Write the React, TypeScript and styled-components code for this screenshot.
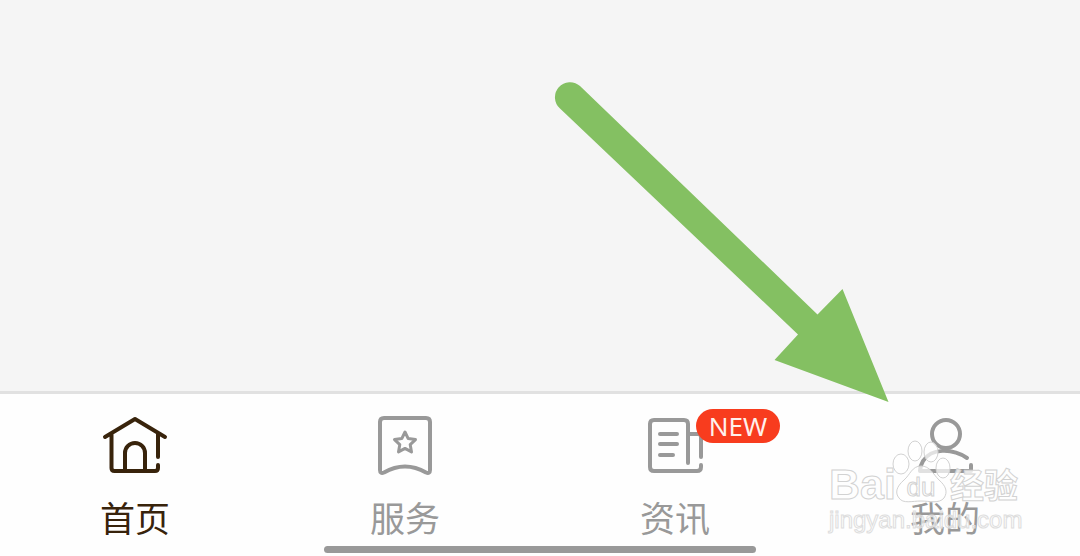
import React from 'react';
import styled, { createGlobalStyle } from 'styled-components';

const GlobalStyle = createGlobalStyle`
  *, *::before, *::after { box-sizing: border-box; }
  body { margin: 0; background: #f5f5f5; font-family: "Noto Sans", "Noto Sans CJK SC", sans-serif; }
`;

const Page = styled.div`
  position: relative;
  display: flex;
  flex-direction: column;
  min-height: 100vh;
  overflow: hidden;
`;

const Content = styled.main`
  flex: 1;
  background: #f5f5f5;
`;

const TabBar = styled.nav`
  display: flex;
  flex-direction: column;
  align-items: center;
  gap: 9px;
  padding: 18px 0 3px;
  border-top: 3px solid #e1e1e1;
  background: #fefefe;
`;

const Tabs = styled.div`
  display: grid;
  grid-template-columns: repeat(4, 1fr);
  width: 100%;
`;

const Tab = styled.button<{ $active?: boolean }>`
  display: flex;
  flex-direction: column;
  align-items: center;
  gap: 21px;
  padding: 0;
  border: 0;
  background: none;
  color: ${(p) => (p.$active ? '#38230b' : '#999999')};
  font-family: "Noto Sans CJK SC", sans-serif;
  font-size: 35px;
  line-height: 40px;
  cursor: pointer;
`;

const IconBox = styled.span`
  position: relative;
  display: block;
  width: 72px;
  height: 64px;
`;

const Glyph = styled.svg`
  display: block;
  width: 100%;
  height: 100%;
  fill: none;
  stroke: currentColor;
  stroke-width: 4;
  stroke-linecap: round;
  stroke-linejoin: round;
`;

const Badge = styled.span`
  position: absolute;
  top: -3px;
  left: 57px;
  width: 84px;
  border-radius: 17px;
  background: #f83c1e;
  color: #fff0ec;
  font-family: "Noto Sans", sans-serif;
  font-size: 26px;
  line-height: 34px;
  text-align: center;
`;

const HomeIndicator = styled.div`
  width: 40%;
  height: 7px;
  border-radius: 4px;
  background: #999999;
`;

const Arrow = styled.svg`
  position: absolute;
  right: 190px;
  bottom: 152px;
  width: 336px;
  height: 324px;
  pointer-events: none;
`;

const Watermark = styled.div`
  position: absolute;
  right: 59px;
  bottom: 22px;
  width: 192px;
  pointer-events: none;
  color: rgba(255, 255, 255, 0.8);
  -webkit-text-stroke: 1px #d2d2d2;
  font-family: "Liberation Sans", "Noto Sans CJK SC", sans-serif;
`;

const Brand = styled.div`
  display: flex;
  align-items: flex-end;
  font-size: 43px;
  font-weight: 700;
  line-height: 44px;
`;

const Paw = styled.svg`
  flex: none;
  width: 60px;
  height: 66px;
  margin: 0 -2px 0 -4px;
  fill: rgba(255, 255, 255, 0.7);
  stroke: #d2d2d2;
`;

const BrandSuffix = styled.span`
  font-family: "Noto Sans CJK SC", sans-serif;
  font-size: 34px;
  white-space: nowrap;
`;

const Address = styled.div`
  color: rgba(255, 255, 255, 0.5);
  -webkit-text-stroke: 1px #dddddd;
  font-size: 24px;
  line-height: 28px;
`;

function HomeIcon() {
  return (
    <Glyph viewBox="0 0 72 64" aria-hidden="true">
      <path d="M6 25 36 7l30 18M12.500 22v34q0 3 3 3H56q3 0 3-3v-3M59 22v23M26 58V41a10 10 0 0 1 20 0v17" />
    </Glyph>
  );
}

function ServiceIcon() {
  return (
    <Glyph viewBox="0 0 72 64" aria-hidden="true">
      <path d="M15 6h42q4 0 4 4v48q0 4-4 2.500-21-12-42 0-4 1.500-4-2.500V10q0-4 4-4Z" />
      <path strokeWidth="3" d="m36 20 3.200 6.600 7.300 1-5.300 5 1.300 7.300-6.500-3.500-6.500 3.500 1.300-7.300-5.300-5 7.300-1Z" />
    </Glyph>
  );
}

function NewsIcon() {
  return (
    <Glyph viewBox="0 0 72 64" aria-hidden="true">
      <path d="M49 51V12q0-4-4-4H15q-4 0-4 4v43q0 4 4 4h43q4 0 4-4v-2M50 22h9q3 0 3 3v20M21 22h17M21 32h17M21 43h13" />
    </Glyph>
  );
}

function ProfileIcon() {
  return (
    <Glyph viewBox="0 0 72 64" aria-hidden="true">
      <circle cx="37" cy="22" r="14" />
      <path d="M58 46C43 36 22 36 14 49q-3 5-3 10h51v-6" />
    </Glyph>
  );
}

export default function App() {
  return (
    <>
      <GlobalStyle />
      <Page>
        <Content />
        <TabBar>
          <Tabs>
            <Tab type="button" $active aria-current="page">
              <IconBox><HomeIcon /></IconBox>
              首页
            </Tab>
            <Tab type="button">
              <IconBox><ServiceIcon /></IconBox>
              服务
            </Tab>
            <Tab type="button">
              <IconBox>
                <NewsIcon />
                <Badge>NEW</Badge>
              </IconBox>
              资讯
            </Tab>
            <Tab type="button">
              <IconBox><ProfileIcon /></IconBox>
              我的
            </Tab>
          </Tabs>
          <HomeIndicator />
        </TabBar>
        <Arrow viewBox="0 0 336 324" aria-hidden="true">
          <path
            fill="#84c062"
            d="M26 6 263.500 234.500 288.500 209 334.500 322 220.500 280 244 254.500 6 28.500A14 14 0 0 1 26 6Z"
          />
        </Arrow>
        <Watermark>
          <Brand>
            <span>Bai</span>
            <Paw viewBox="0 0 60 66" aria-hidden="true">
              <ellipse cx="9" cy="24" rx="8" ry="10" />
              <ellipse cx="23" cy="11" rx="7" ry="10" />
              <ellipse cx="39" cy="12" rx="7" ry="10" />
              <ellipse cx="51" cy="28" rx="7" ry="10" />
              <path d="M29 26c-9 0-11 9-17 14-8 7-9 13-5 18 4 6 13 3 22 3s18 3 23-3c4-6 2-12-5-18-6-6-9-14-18-14Z" />
              <text x="29" y="56" textAnchor="middle" fontSize="26" fontWeight="400">du</text>
            </Paw>
            <BrandSuffix>经验</BrandSuffix>
          </Brand>
          <Address>jingyan.baidu.com</Address>
        </Watermark>
      </Page>
    </>
  );
}
